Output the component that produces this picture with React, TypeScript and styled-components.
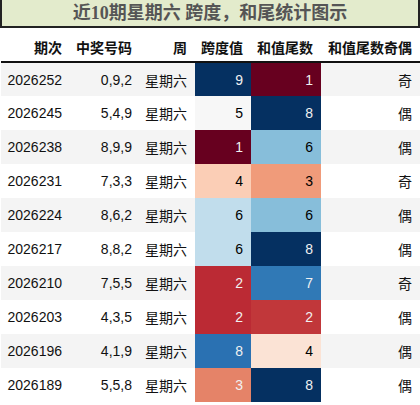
import React from 'react';
import styled, { createGlobalStyle } from 'styled-components';

type Draw = { issue: string; nums: string; day: string; span: number; tail: number; parity: string };

const draws: Draw[] = [
  { issue: '2026252', nums: '0,9,2', day: '星期六', span: 9, tail: 1, parity: '奇' },
  { issue: '2026245', nums: '5,4,9', day: '星期六', span: 5, tail: 8, parity: '偶' },
  { issue: '2026238', nums: '8,9,9', day: '星期六', span: 1, tail: 6, parity: '偶' },
  { issue: '2026231', nums: '7,3,3', day: '星期六', span: 4, tail: 3, parity: '奇' },
  { issue: '2026224', nums: '8,6,2', day: '星期六', span: 6, tail: 6, parity: '偶' },
  { issue: '2026217', nums: '8,8,2', day: '星期六', span: 6, tail: 8, parity: '偶' },
  { issue: '2026210', nums: '7,5,5', day: '星期六', span: 2, tail: 7, parity: '奇' },
  { issue: '2026203', nums: '4,3,5', day: '星期六', span: 2, tail: 2, parity: '偶' },
  { issue: '2026196', nums: '4,1,9', day: '星期六', span: 8, tail: 4, parity: '偶' },
  { issue: '2026189', nums: '5,5,8', day: '星期六', span: 3, tail: 8, parity: '偶' },
];

// RdBu colormap stops
const rdbu = [
  [103, 0, 31], [178, 24, 43], [214, 96, 77], [244, 165, 130], [253, 219, 199],
  [247, 247, 247], [209, 229, 240], [146, 197, 222], [67, 147, 195], [33, 102, 172], [5, 48, 97],
];

const heat = (v: number, min: number, max: number) => {
  const t = (v - min) / (max - min);
  const pos = t * 10;
  const i = Math.min(9, Math.floor(pos));
  const f = pos - i;
  const c = rdbu[i].map((a, k) => Math.round(a + (rdbu[i + 1][k] - a) * f));
  const lum = c
    .map(x => x / 255)
    .map(x => (x <= 0.03928 ? x / 12.92 : Math.pow((x + 0.055) / 1.055, 2.4)));
  const L = 0.2126 * lum[0] + 0.7152 * lum[1] + 0.0722 * lum[2];
  return { bg: `rgb(${c.join(',')})`, fg: L < 0.408 ? '#f1f1f1' : '#000000' };
};

const GlobalStyle = createGlobalStyle`
  body {
    margin: 0;
    background: #fff;
    font-family: "Liberation Sans", "Noto Sans CJK SC", sans-serif;
  }
`;

const Page = styled.div`
  width: 420px;
`;

const TitleBar = styled.div`
  height: 26px;
  border: 2px solid #222;
  border-top: none;
  background: #e3ebcc;
  color: #555;
  font-family: "Liberation Serif", "Noto Sans CJK SC", serif;
  font-weight: bold;
  font-size: 18px;
  line-height: 26px;
  text-align: center;
`;

const Table = styled.table`
  border-collapse: collapse;
  table-layout: fixed;
  width: 419px;
  margin-left: 1px;
  font-size: 14px;
  color: #111;
`;

const HeadRow = styled.tr`
  height: 34px;
  border-bottom: 2px solid #111;
`;

const HeadCell = styled.th<{ $w: number }>`
  box-sizing: border-box;
  width: ${p => p.$w}px;
  padding: 4px 8px 0 0;
  text-align: right;
  font-weight: bold;
  white-space: nowrap;
`;

const Row = styled.tr<{ $striped: boolean }>`
  height: 34px;
  background: ${p => (p.$striped ? '#f4f4f4' : '#ffffff')};
`;

const Cell = styled.td`
  box-sizing: border-box;
  padding: 0 8px 0 0;
  text-align: right;
  white-space: nowrap;
`;

const HeatCell = styled(Cell)<{ $bg: string; $fg: string }>`
  background: ${p => p.$bg};
  color: ${p => p.$fg};
`;

const columns: [string, number][] = [
  ['期次', 69], ['中奖号码', 70], ['周', 55], ['跨度值', 56], ['和值尾数', 70], ['和值尾数奇偶', 99],
];

export default function App() {
  const spans = draws.map(d => d.span);
  const tails = draws.map(d => d.tail);
  const sMin = Math.min(...spans), sMax = Math.max(...spans);
  const tMin = Math.min(...tails), tMax = Math.max(...tails);

  return (
    <Page>
      <GlobalStyle />
      <TitleBar>近10期星期六 跨度，和尾统计图示</TitleBar>
      <Table>
        <thead>
          <HeadRow>
            {columns.map(([label, w]) => (
              <HeadCell key={label} $w={w}>{label}</HeadCell>
            ))}
          </HeadRow>
        </thead>
        <tbody>
          {draws.map((d, i) => {
            const s = heat(d.span, sMin, sMax);
            const t = heat(d.tail, tMin, tMax);
            return (
              <Row key={d.issue} $striped={i % 2 === 0}>
                <Cell>{d.issue}</Cell>
                <Cell>{d.nums}</Cell>
                <Cell>{d.day}</Cell>
                <HeatCell $bg={s.bg} $fg={s.fg}>{d.span}</HeatCell>
                <HeatCell $bg={t.bg} $fg={t.fg}>{d.tail}</HeatCell>
                <Cell>{d.parity}</Cell>
              </Row>
            );
          })}
        </tbody>
      </Table>
    </Page>
  );
}
